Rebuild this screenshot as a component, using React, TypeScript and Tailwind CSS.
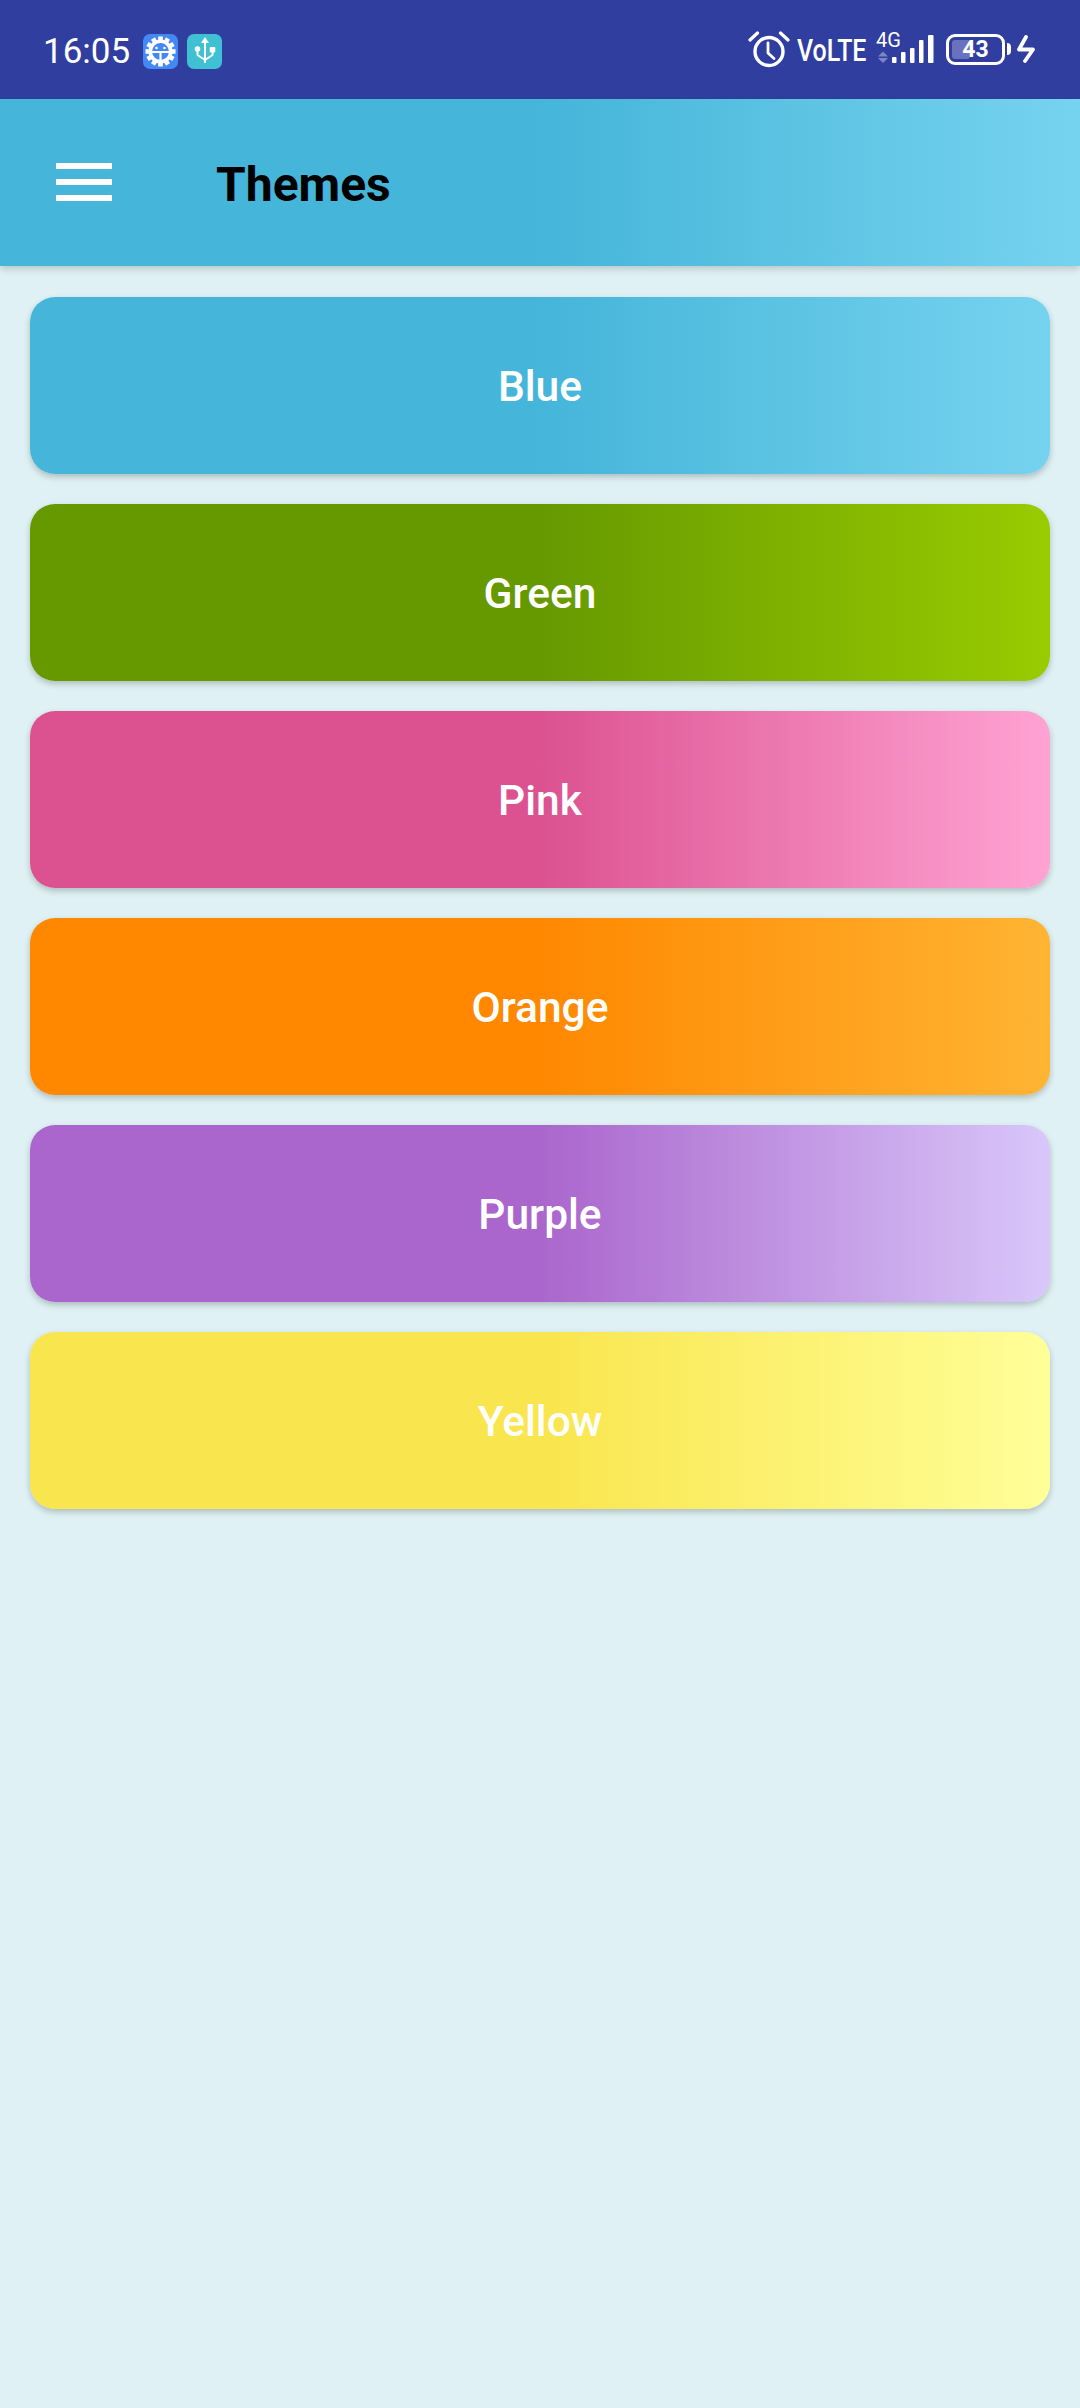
const font = { fontFamily: "Roboto, sans-serif" };

const themes = [
  { name: "Blue", cls: "bg-[linear-gradient(90deg,#45b5d9_0%,#45b5d9_50%,#76d3ef_100%)]" },
  { name: "Green", cls: "bg-[linear-gradient(90deg,#669900_0%,#669900_50%,#99cc00_100%)]" },
  { name: "Pink", cls: "bg-[linear-gradient(90deg,#dc5291_0%,#dc5291_50%,#ffa3d3_100%)]" },
  { name: "Orange", cls: "bg-[linear-gradient(90deg,#ff8800_0%,#ff8800_50%,#ffb433_100%)]" },
  { name: "Purple", cls: "bg-[linear-gradient(90deg,#aa66cc_0%,#aa66cc_50%,#d9c7fa_100%)]" },
  { name: "Yellow", cls: "bg-[linear-gradient(90deg,#f9e54d_0%,#f9e54d_50%,#ffff99_100%)]" },
];

function GearBadge() {
  const teeth = Array.from({ length: 12 }, (_, i) => i * 30);
  return (
    <svg width="35" height="35" viewBox="0 0 35 35" className="ml-[13px]">
      <rect width="35" height="35" rx="7" fill="#4388f5" />
      {teeth.map((a) => (
        <rect key={a} x="15.2" y="2.5" width="4.6" height="5" fill="#fff" transform={`rotate(${a} 17.5 17.5)`} />
      ))}
      <circle cx="17.5" cy="17.5" r="10.2" fill="none" stroke="#fff" strokeWidth="3.6" />
      <path d="M8 18h19M17.5 18v9" stroke="#fff" strokeWidth="2.2" />
      <circle cx="13.5" cy="14" r="1.3" fill="#fff" />
      <circle cx="21.5" cy="14" r="1.3" fill="#fff" />
    </svg>
  );
}

function UsbBadge() {
  return (
    <svg width="35" height="35" viewBox="0 0 35 35" className="ml-[9px]">
      <rect width="35" height="35" rx="7" fill="#3fc0d3" />
      <path
        d="M18 29V7M18 26l-7.5-5V15M18 26l7.5-5v-5"
        fill="none"
        stroke="#fff"
        strokeWidth="2"
        strokeLinejoin="round"
      />
      <path d="M18 3l4 6h-8z" fill="#fff" />
      <circle cx="10.5" cy="15" r="2.8" fill="#fff" />
      <rect x="22.7" y="13" width="5.6" height="5.6" rx="1" fill="#fff" />
    </svg>
  );
}

function Alarm() {
  return (
    <svg width="42" height="38" viewBox="0 0 42 38">
      <circle cx="21" cy="20.5" r="14" fill="none" stroke="#fff" strokeWidth="3.4" />
      <path d="M20 12v10l6 5.5" fill="none" stroke="#fff" strokeWidth="2.8" strokeLinecap="round" strokeLinejoin="round" />
      <path d="M2 9L9.5 2M40 9L32.5 2" fill="none" stroke="#fff" strokeWidth="3.2" strokeLinecap="round" />
    </svg>
  );
}

function Signal() {
  return (
    <div className="relative w-[58px] h-[30px] ml-[10px] mb-[4px] shrink-0">
      <span className="absolute left-0 top-[-2px] text-[20px] leading-[18px] text-white" style={font}>4G</span>
      <svg width="58" height="30" viewBox="0 0 58 30" className="absolute left-0 top-0">
        <path d="M2 23.5l5-5 5 5zM2 25l5 5 5-5z" fill="#7d86c4" />
        <rect x="16" y="24" width="4.5" height="6" rx="1" fill="#fff" />
        <rect x="25" y="19" width="4.5" height="11" rx="1" fill="#fff" />
        <rect x="34" y="15" width="4.5" height="15" rx="1" fill="#fff" />
        <rect x="43" y="7" width="4.5" height="23" rx="1" fill="#fff" />
        <rect x="52" y="2" width="5.5" height="28" rx="1" fill="#fff" />
      </svg>
    </div>
  );
}

function Battery() {
  return (
    <div className="flex items-center ml-[12px] mb-[2px]">
      <div className="relative w-[59px] h-[31px] rounded-[9px] border-[3px] border-white">
        <div className="absolute left-[3px] top-[3px] bottom-[3px] w-[18px] rounded-[3px] bg-[#6a72c0]" />
        <span className="absolute inset-0 flex items-center justify-center text-white text-[23px] font-bold leading-none" style={font}>43</span>
      </div>
      <div className="w-[4px] h-[12px] bg-white rounded-r-sm ml-[2px]" />
      <svg width="18" height="28" viewBox="0 0 18 28" className="ml-[6px]">
        <path d="M9 2L2 14.5H16L8 26" fill="none" stroke="#fff" strokeWidth="3.8" strokeLinejoin="round" strokeLinecap="round" />
      </svg>
    </div>
  );
}

export default function App() {
  return (
    <div className="w-[1080px] h-[2408px] bg-[#dff1f4] flex flex-col overflow-hidden" style={font}>
      <div className="h-[99px] shrink-0 bg-[#303f9f] flex items-center pl-[43px] pr-[45px] pt-[3px]">
        <span className="text-[35px] leading-none text-white">16:05</span>
        <GearBadge />
        <UsbBadge />
        <div className="ml-auto flex items-center pb-[2px]">
          <Alarm />
          <div className="ml-[7px] w-[69px] h-[32px] overflow-visible">
            <span className="block w-max origin-left scale-x-[0.78] text-white text-[32px] font-medium leading-[32px]">VoLTE</span>
          </div>
          <Signal />
          <Battery />
        </div>
      </div>

      <div className="h-[167px] shrink-0 flex items-center pb-[1px] shadow-[0_3px_7px_rgba(0,0,0,0.18)] bg-[linear-gradient(90deg,#45b5d9_0%,#45b5d9_50%,#76d3ef_100%)]">
        <div className="ml-[56px] w-[56px] flex flex-col gap-[10px]">
          <div className="h-[6px] bg-white" />
          <div className="h-[6px] bg-white" />
          <div className="h-[6px] bg-white" />
        </div>
        <span className="ml-[104px] pt-[6px] text-[48px] leading-none font-bold text-black">Themes</span>
      </div>

      <div className="flex flex-col gap-[30px] px-[30px] pt-[31px]">
        {themes.map((t) => (
          <div
            key={t.name}
            className={`h-[177px] rounded-[25px] flex items-center justify-center pt-[3px] shadow-[0_3px_6px_rgba(0,0,0,0.22)] ${t.cls}`}
          >
            <span className="text-white text-[42.5px] font-medium leading-none">{t.name}</span>
          </div>
        ))}
      </div>
    </div>
  );
}
